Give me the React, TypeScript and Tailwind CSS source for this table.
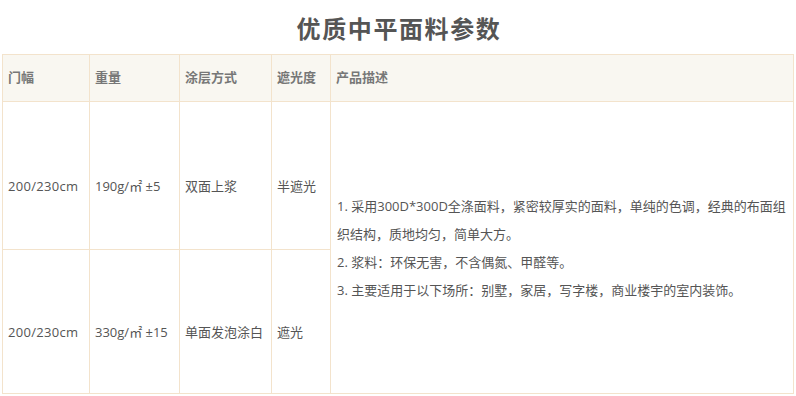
import React from 'react'

const font = { fontFamily: '"Open Sans", "Noto Sans CJK SC", sans-serif' }

const rows = [
  { width: '200/230cm', weight: '190g/㎡ ±5', coat: '双面上浆', shade: '半遮光' },
  { width: '200/230cm', weight: '330g/㎡ ±15', coat: '单面发泡涂白', shade: '遮光' },
]

const desc = [
  '1. 采用300D*300D全涤面料，紧密较厚实的面料，单纯的色调，经典的布面组织结构，质地均匀，简单大方。',
  '2. 浆料：环保无害，不含偶氮、甲醛等。',
  '3. 主要适用于以下场所：别墅，家居，写字楼，商业楼宇的室内装饰。',
]

export default function App() {
  return (
    <div className="w-[796px] h-[396px] bg-white overflow-hidden" style={font}>
      <h1 className="h-[54px] pt-[10px] pl-[2px] text-center text-[24px] font-bold text-[#555] tracking-[1.6px] font-['Noto_Sans_CJK_SC',sans-serif]">
        优质中平面料参数
      </h1>
      <table className="ml-[2px] w-[792px] border-collapse table-fixed text-[13px] text-[#555]">
        <colgroup>
          <col className="w-[87px]" />
          <col className="w-[90px]" />
          <col className="w-[92px]" />
          <col className="w-[59px]" />
          <col />
        </colgroup>
        <thead>
          <tr className="h-[47px] bg-[#f9f7f1]">
            {['门幅', '重量', '涂层方式', '遮光度', '产品描述'].map((h) => (
              <th key={h} className="border border-[#f3e3cc] px-[5px] text-left font-bold text-[13px] text-[#777]">
                {h}
              </th>
            ))}
          </tr>
        </thead>
        <tbody>
          {rows.map((r, i) => (
            <tr key={i} className={i === 0 ? 'h-[148px]' : 'h-[144px]'}>
              <td className="border border-[#f3e3cc] px-[5px] pt-[22px] tracking-[0.3px]">{r.width}</td>
              <td className="border border-[#f3e3cc] px-[5px] pt-[22px] whitespace-nowrap">{r.weight}</td>
              <td className="border border-[#f3e3cc] px-[5px] pt-[22px]">{r.coat}</td>
              <td className="border border-[#f3e3cc] px-[5px] pt-[22px]">{r.shade}</td>
              {i === 0 && (
                <td rowSpan={2} className="border border-[#f3e3cc] px-[6px] align-middle leading-[28px]">
                  {desc.map((d) => (
                    <div key={d}>{d}</div>
                  ))}
                </td>
              )}
            </tr>
          ))}
        </tbody>
      </table>
    </div>
  )
}
